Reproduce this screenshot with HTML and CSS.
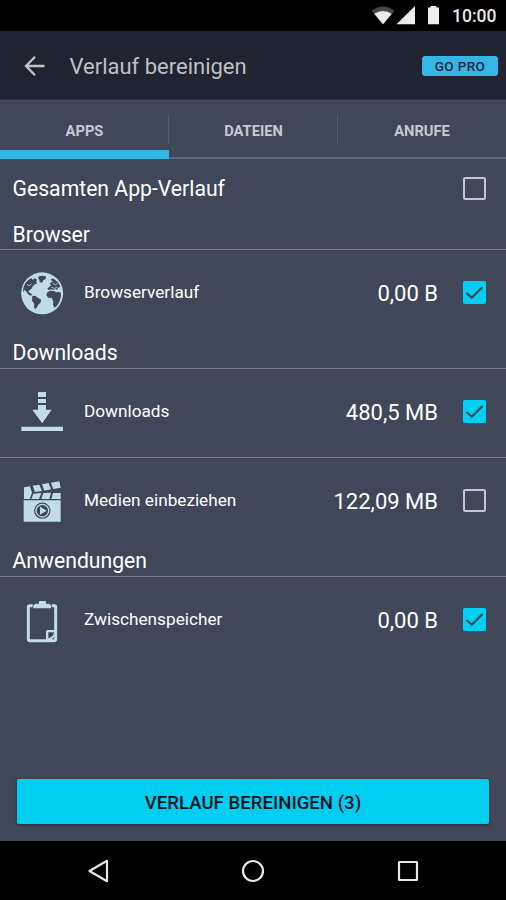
FILE: index.html
```html
<!DOCTYPE html>
<html lang="de">
<head>
<meta charset="utf-8">
<title>Verlauf bereinigen</title>
<link rel="stylesheet" href="styles.css">
</head>
<body>
<div class="phone">
  <div class="status">
    <svg class="signals" width="80" height="31" viewBox="0 0 80 31">
      <path d="M1.500 10.800Q13 2 24.500 10.800L13 24.500Z" fill="#484848"/>
      <path d="M4.300 13.700Q13 8.500 21.700 13.700L13 24.300Z" fill="#ececec"/>
      <path d="M26.500 24.300L45 6V24.300Z" fill="#ececec"/>
      <path d="M58 7.500H60.500V6H66.500V7.500H69V24.300H58Z" fill="#ececec"/>
    </svg>
    <span class="clock">10:00</span>
  </div>
  <header class="bar">
    <svg class="back" width="22" height="22" viewBox="0 0 22 22"><path d="M11 1.700L2 11L11 20.300M2 11H20.500" fill="none" stroke="#c4c4c8" stroke-width="2.300"/></svg>
    <h1 class="title">Verlauf bereinigen</h1>
    <span class="pro">GO PRO</span>
  </header>
  <nav class="tabs">
    <div class="tab active">APPS</div>
    <div class="tab">DATEIEN</div>
    <div class="tab">ANRUFE</div>
  </nav>
  <main class="list">
    <div class="all"><span>Gesamten App-Verlauf</span><span class="box"></span></div>
    <h2 class="head first">Browser</h2>
    <div class="row">
      <svg class="icon" viewBox="0 0 180 180">
        <circle cx="90.500" cy="91" r="63" fill="#c1dbe7"/>
        <path fill="#3f4759" d="M34 88C32 73 39 58 52 49L59 45L61 50L69 46L76 50L72 56L76 61L69 64L62 70L59 77L53 81L49 87L55 90L61 96L56 98L48 94L43 86L38 80Z"/>
        <path fill="#3f4759" d="M80 40Q91 36 102 40L101 48L94 52L90 59L83 58L82 50L78 45Z"/>
        <path fill="#3f4759" d="M61 99L70 98L77 104L88 110L85 120L78 126L74 135L69 138L66 132L67 122L60 113Z"/>
        <path fill="#3f4759" d="M115 51L122 46Q139 55 145 71L139 74L135 80L128 77L126 81L119 79L110 81L106 77L111 72L118 67L113 63L118 58L123 55Z"/>
        <path fill="#3f4759" d="M106 88L114 83L127 84L131 88L140 87L147 90Q148 111 135 128L128 134L123 126L124 115L119 105L109 104L103 97Z"/>
        <path fill="none" stroke="#c1dbe7" stroke-width="2.500" d="M118 73L128 76L136 73M122 62L130 65L137 61M45 65L53 68L58 62"/>
      </svg>
      <span class="name">Browserverlauf</span><span class="size">0,00 B</span>
      <span class="box on"><svg viewBox="0 0 23 23"><path d="M3.500 12L8.800 16.800L19.500 6"/></svg></span>
    </div>
    <h2 class="head">Downloads</h2>
    <div class="row mid">
      <svg class="icon" viewBox="0 0 180 180" fill="#c1dbe7"><path d="M78 30H102V45H78ZM78 51H102V63H78ZM78 69H102V83H119L90.500 124L61 83H78ZM28 134H153V147H28Z"/></svg>
      <span class="name">Downloads</span><span class="size">480,5 MB</span>
      <span class="box on"><svg viewBox="0 0 23 23"><path d="M3.500 12L8.800 16.800L19.500 6"/></svg></span>
    </div>
    <div class="row">
      <svg class="icon" viewBox="0 0 180 180">
        <path fill="#c1dbe7" d="M36 49L54 46L60 65L53 84H36ZM62 44L82 41L90 60L69 63ZM90 40L110 36L117 55L97 59ZM117 35L142 31L146 50L124 54ZM64 68L88 66L81 84H58ZM94 66L117 65L112 84H88ZM123 66H146V84H118ZM35 88H146V152H35Z"/>
        <circle cx="91" cy="119" r="24.500" fill="#3f4759"/>
        <circle cx="91" cy="119" r="19" fill="none" stroke="#c1dbe7" stroke-width="4"/>
        <path d="M84 107V131L104 119Z" fill="#c1dbe7"/>
      </svg>
      <span class="name">Medien einbeziehen</span><span class="size">122,09 MB</span>
      <span class="box"></span>
    </div>
    <h2 class="head">Anwendungen</h2>
    <div class="row">
      <svg class="icon" viewBox="0 0 180 180">
        <path d="M62 47H52Q49 47 49 50V148Q49 152 53 152H126Q131 152 131 147V50Q131 47 128 47H119" fill="none" stroke="#c1dbe7" stroke-width="9"/>
        <path d="M64 55V46L71 41H81V35Q81 33 84 33H99Q102 33 102 36V41H111L117 46V55Z" fill="#c1dbe7"/>
        <path d="M102 148V125Q102 120 107 120H134V131L116 153H102Z" fill="#c1dbe7"/>
        <path d="M109 145V127H126Q125 140 109 145Z" fill="#3f4759"/>
      </svg>
      <span class="name">Zwischenspeicher</span><span class="size">0,00 B</span>
      <span class="box on"><svg viewBox="0 0 23 23"><path d="M3.500 12L8.800 16.800L19.500 6"/></svg></span>
    </div>
  </main>
  <div class="action"><button class="clean">VERLAUF BEREINIGEN (3)</button></div>
  <nav class="keys">
    <svg width="26" height="26" viewBox="0 0 26 26"><path d="M4.500 13L22 2.800V23.200Z"/></svg>
    <svg width="26" height="26" viewBox="0 0 26 26"><circle cx="13" cy="13" r="10"/></svg>
    <svg width="26" height="26" viewBox="0 0 26 26"><rect x="4" y="4" width="18" height="18" rx=".5"/></svg>
  </nav>
</div>
</body>
</html>
```
FILE: styles.css
```css
* { box-sizing: border-box; }
body { margin: 0; background: #000; font-family: Roboto, sans-serif; color: #fff; }
.phone { width: 506px; height: 900px; display: flex; flex-direction: column; background: #3f4759; overflow: hidden; }
.status { height: 31px; flex: none; background: #000; display: flex; justify-content: flex-end; align-items: center; padding-right: 10px; }
.signals { margin-right: 2px; }
.clock { width: 44px; font-size: 17.5px; font-weight: 500; line-height: 31px; padding-top: 1px; color: #e8e8e8; white-space: nowrap; }
.bar { height: 69px; flex: none; background: #1f2430; display: flex; align-items: center; padding: 1px 8px 0 24px; border-bottom: 1px solid #2c3341; }
.title { margin: 0 auto 0 23.5px; padding-top: 2px; font-size: 22px; font-weight: 400; line-height: 30px; color: #bfc0c3; white-space: nowrap; }
.pro { width: 76px; height: 20px; border-radius: 3px; background: #35b5e5; color: #1d2838; font-size: 13.5px; font-weight: 500; line-height: 21px; text-align: center; letter-spacing: .4px; }
.tabs { height: 59px; flex: none; display: grid; grid-template-columns: 169px 169px 168px; background: linear-gradient(#5f677b, #5f677b) bottom / 100% 2px no-repeat; }
.tab { display: flex; align-items: center; justify-content: center; padding-top: 2px; font-size: 14.7px; font-weight: 700; color: #c6c9d0; background: linear-gradient(#555d6e, #555d6e) right 15px / 1px 29px no-repeat; }
.tab:last-child { background: none; }
.active { border-bottom: 9px solid #35b5e5; padding-top: 11px; }
.list { flex: 1; }
.all { height: 59px; display: flex; align-items: center; justify-content: space-between; padding: 0 20.5px 0 12.5px; font-size: 21.2px; }
.head { margin: 0; height: 33px; padding-left: 12.5px; border-bottom: 1px solid #7c7f87; font-size: 21.2px; font-weight: 400; line-height: 34px; }
.first { height: 32px; line-height: 33px; }
.row { height: 86px; display: flex; align-items: center; padding: 0 20.5px 1px 12px; }
.mid { height: 89px; padding-bottom: 3px; border-bottom: 1px solid #7c7f87; }
.icon { width: 60px; height: 60px; flex: none; }
.name { margin-left: 12px; padding-bottom: 2px; font-size: 17.2px; white-space: nowrap; }
.size { margin-left: auto; margin-right: 24.5px; font-size: 22px; line-height: 26px; padding-top: 2px; }
.box { width: 23px; height: 23px; flex: none; border: 2px solid #c4c7cd; border-radius: 2px; }
.on { border: 0; background: #00cef2; }
.on svg { display: block; fill: none; stroke: #3f4759; stroke-width: 2.200; }
.action { height: 62px; flex: none; padding: 0 17px; }
.clean { display: block; width: 100%; height: 45px; border: 0; border-radius: 2px; background: #00cef1; box-shadow: 0 1px 3px #252938; padding: 2px 0 0; font: 500 18.6px Roboto, sans-serif; color: #04141c; }
.keys { height: 59px; flex: none; background: #000; display: flex; justify-content: space-between; align-items: center; padding: 0 85px; }
.keys svg { fill: none; stroke: #e6e6e6; stroke-width: 2.200; stroke-linejoin: round; }
```
